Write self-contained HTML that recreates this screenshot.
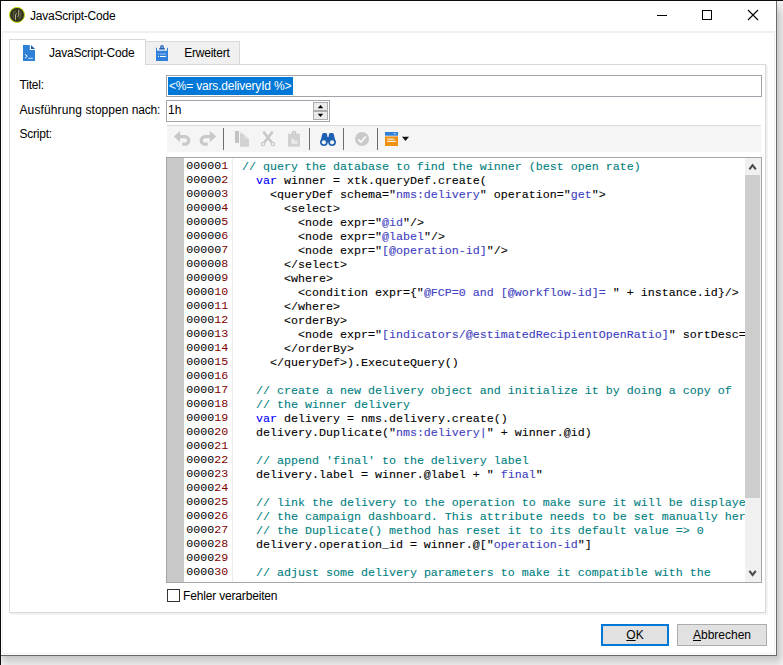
<!DOCTYPE html>
<html lang="de">
<head>
<meta charset="utf-8">
<title>JavaScript-Code</title>
<style>
html,body{margin:0;padding:0;}
body{width:783px;height:665px;overflow:hidden;position:relative;background:#e9e9e9;font-family:"Liberation Sans",sans-serif;font-size:12px;color:#000;}
.abs{position:absolute;}
#shadowR{left:777px;top:1px;width:6px;height:655px;background:linear-gradient(to bottom,rgba(255,255,255,.7),rgba(255,255,255,0) 14px),linear-gradient(to right,#c9c9c9,#e5e5e5);}
#shadowB{left:1px;top:656px;width:776px;height:9px;background:linear-gradient(to right,rgba(255,255,255,.85),rgba(255,255,255,.3) 1px,rgba(255,255,255,0) 7px),linear-gradient(to bottom,#c6c6c6,#e7e7e7);}
#shadowC{left:777px;top:656px;width:6px;height:9px;background:radial-gradient(ellipse 8px 11px at 0 0,#cbcbcb,#f0f0f0);}
#win{left:1px;top:1px;width:775px;height:654px;background:#fff;border-right:1px solid #6c6c6c;border-bottom:1px solid #666;}
#topline{left:0;top:0;width:783px;height:1px;background:#0c0c0c;}
#leftline{left:0;top:0;width:1px;height:665px;background:#0c0c0c;}
#client{left:2px;top:31px;width:771px;height:620px;border:1px solid #f0f0f0;border-top-width:2px;background:#fff;}
.t{position:absolute;white-space:nowrap;line-height:14px;}
#panel{left:9px;top:64px;width:755px;height:547px;border:1px solid #d9d9d9;background:#fff;box-shadow:1px 1px 0 #f0f0f0,2px 2px 0 #f4f4f4;}
#tab1{left:9px;top:39px;width:135px;height:25px;border:1px solid #d9d9d9;border-bottom:none;background:#fff;}
#tab2{left:145px;top:41px;width:95px;height:23px;border:1px solid #d9d9d9;border-left:none;border-bottom:none;background:#f0f0f0;box-sizing:border-box;}
.inp{border:1px solid #a3a3ab;background:#fff;box-sizing:border-box;}
#toolbar{left:167px;top:125px;width:594px;height:27px;background:#f5f5f5;border-top:1px solid #dadada;box-sizing:border-box;}
.sep{position:absolute;top:128px;width:1px;height:22px;background:#6d6d6d;}
#editor{left:166px;top:157px;width:596px;height:426px;border:1px solid #a3a3ab;box-sizing:border-box;background:#fff;overflow:hidden;}
#gutter{left:0;top:0;width:17px;height:424px;background:#c8c8c8;}
#lnsep{left:65px;top:1px;width:1px;height:423px;background:#ebebeb;}
pre{margin:0;font-family:"Liberation Mono",monospace;font-size:11.667px;line-height:14px;position:absolute;top:2px;white-space:pre;}
#ln{left:19.300px;top:1.400px;color:#000;}
#ln b{font-weight:normal;color:#800000;}
#code{left:75px;color:#000;-webkit-text-stroke:0.1px currentColor;}
.c{color:#008080;}
.k{color:#0000ff;}
.s{color:#4040c0;}
#vsb{left:578px;top:0;width:16px;height:424px;background:#f0f0f0;}
#thumb{left:0;top:17px;width:15px;height:323px;background:#cdcdcd;}
.btn{box-sizing:border-box;background:#e1e1e1;border:1px solid #adadad;text-align:center;line-height:20px;}
u{text-decoration:underline;}
</style>
</head>
<body>
<div class="abs" id="shadowR"></div>
<div class="abs" id="shadowB"></div>
<div class="abs" id="shadowC"></div>
<div class="abs" id="win"></div>
<div class="abs" id="topline"></div>
<div class="abs" id="leftline"></div>

<!-- title bar -->
<svg class="abs" style="left:8px;top:6px" width="18" height="18" viewBox="8 6 18 18">
  <circle cx="17" cy="14.900" r="7.500" fill="#34331f" stroke="#c3dc12" stroke-width="1"/>
  <path d="M13.500 18.500V13.800Q13.500 11.300 16 11.300M20.500 11.500V16Q20.500 18.500 18 18.500" fill="none" stroke="#56553a" stroke-width="1.600"/>
  <path d="M15.500 20V14.800Q15.500 13.600 16.900 13.600M18.700 9.800V15.200Q18.700 16.500 17.300 16.500" fill="none" stroke="#bdbd97" stroke-width="0.900"/>
</svg>
<div class="t" style="left:30px;top:9px;letter-spacing:-0.22px;">JavaScript-Code</div>
<svg class="abs" style="left:650px;top:1px" width="125" height="30" viewBox="0 0 125 30">
  <path d="M7 14.5H17" stroke="#000" stroke-width="1" fill="none"/>
  <rect x="52.5" y="9.5" width="9" height="9" stroke="#000" stroke-width="1" fill="none"/>
  <path d="M98 9L108 19M108 9L98 19" stroke="#000" stroke-width="1.1" fill="none"/>
</svg>

<div class="abs" id="client"></div>
<div class="abs" id="panel"></div>
<div class="abs" id="tab2"></div>
<div class="abs" id="tab1"></div>

<!-- tab icons -->
<svg class="abs" style="left:23px;top:45px" width="12" height="16" viewBox="0 0 12 16">
  <path d="M0 0H6.800V5H12V16H0Z" fill="#2e80d8"/>
  <path d="M8 0L12 3.900H8Z" fill="#165db2"/>
  <path d="M2 9.300L4.300 11.200L2 13.100" stroke="#fff" stroke-width="1" fill="none"/>
  <path d="M5.200 13.300H9.800" stroke="#e4eefa" stroke-width="0.900" fill="none"/>
</svg>
<div class="t" style="left:49px;top:46px;letter-spacing:-0.22px;">JavaScript-Code</div>
<svg class="abs" style="left:156px;top:44px" width="12" height="17" viewBox="0 0 12 17">
  <path d="M0 3.800H1V6.700H11V3.800H12V17H0Z" fill="#2e80d8"/>
  <path d="M3 5.600V4.600L4.200 4V2.900a1.800 1.900 0 0 1 3.600 0V4L9 4.600V5.600Z" fill="#1c5fb3"/>
  <rect x="5.400" y="2.400" width="1.300" height="1.300" fill="#c9dbf0"/>
  <rect x="2" y="9.400" width="0.900" height="1.200" fill="#a9c9ef"/>
  <rect x="4.100" y="9.400" width="5.800" height="1.200" fill="#8fb9ea"/>
  <rect x="2" y="12" width="0.900" height="1" fill="#fff"/>
  <rect x="4.100" y="12" width="5.800" height="1" fill="#fff"/>
</svg>
<div class="t" style="left:184.200px;top:46px;letter-spacing:-0.22px;">Erweitert</div>

<!-- form -->
<div class="t" style="left:19.500px;top:78px;letter-spacing:-0.18px;">Titel:</div>
<div class="t" style="left:19.500px;top:103px;"><span style="letter-spacing:0.12px">Ausführung </span><span style="letter-spacing:0.02px">stoppen </span><span style="letter-spacing:-0.18px">nach:</span></div>
<div class="t" style="left:19.500px;top:127px;letter-spacing:-0.22px;">Script:</div>

<div class="abs inp" style="left:166px;top:75px;width:596px;height:22px;"></div>
<div class="abs" style="left:168px;top:77px;width:125px;height:18px;background:#0078d7;"></div>
<div class="t" style="left:169px;top:79px;color:#fff;letter-spacing:-0.19px;">&lt;%= vars.deliveryId %&gt;</div>

<div class="abs inp" style="left:166px;top:100px;width:164px;height:22px;"></div>
<div class="t" style="left:168px;top:103px;">1h</div>
<div class="abs" style="left:313px;top:102px;width:15px;height:9px;background:#ebebeb;border:1px solid #adadad;box-sizing:border-box;"></div>
<div class="abs" style="left:313px;top:111px;width:15px;height:9px;background:#ebebeb;border:1px solid #adadad;box-sizing:border-box;"></div>
<svg class="abs" style="left:313px;top:102px" width="15" height="18" viewBox="0 0 15 18">
  <path d="M4.800 6.200L7.500 3L10.200 6.200Z" fill="#000"/>
  <path d="M4.800 11.800L7.500 15L10.200 11.800Z" fill="#000"/>
</svg>

<!-- toolbar -->
<div class="abs" id="toolbar"></div>
<div class="sep" style="left:223px"></div>
<div class="sep" style="left:309px"></div>
<div class="sep" style="left:343px"></div>
<div class="sep" style="left:377px"></div>
<svg class="abs" id="tbicons" style="left:167px;top:126px" width="260" height="26" viewBox="167 126 260 26">
  <!-- undo -->
  <path d="M173.800 136.500L180.200 130.800V142.200Z" fill="#c9c9c9"/>
  <path d="M179.800 136.700H185A3.750 3.750 0 0 1 185 144.200H182.300" fill="none" stroke="#c9c9c9" stroke-width="3.300"/>
  <!-- redo -->
  <path d="M216.200 136.500L209.800 130.800V142.200Z" fill="#c9c9c9"/>
  <path d="M210.200 136.700H205A3.750 3.750 0 0 0 205 144.200H207.700" fill="none" stroke="#c9c9c9" stroke-width="3.300"/>
  <!-- copy -->
  <rect x="235" y="131" width="4" height="12" fill="#c2c2c2"/>
  <path d="M240 134H243.500L249 139.500V146.700H240Z" fill="#d2d2d2"/>
  <path d="M240.300 131.300L249 139H243.500V134H240.300Z" fill="#dcdcdc"/>
  <!-- cut -->
  <g fill="none" stroke="#c9c9c9">
    <path d="M263.300 131.600L271.800 142.500M272.700 131.600L264.200 142.500" stroke-width="2.600"/>
    <circle cx="263.100" cy="144" r="1.700" stroke-width="1.200"/>
    <circle cx="272.900" cy="144" r="1.700" stroke-width="1.200"/>
  </g>
  <!-- paste -->
  <rect x="288" y="133.700" width="12" height="13" fill="#d1d1d1"/>
  <path d="M291.700 134.500V133a2.300 2.300 0 0 1 4.600 0V134.500Z" fill="#c6c6c6"/>
  <rect x="293.300" y="132.300" width="1.400" height="1.300" fill="#f5f5f5"/>
  <path d="M291.300 138.700H294.300V140.700H297.400V143.700H291.300Z" fill="#ebebeb"/>
  <!-- find -->
  <g fill="#1f60b3">
    <path d="M320.300 142.300L322.200 134.300Q322.500 133 323.800 133H325.500Q326.800 133 327 134.300L327.500 137H328.500L329 134.300Q329.200 133 330.500 133H332.200Q333.500 133 333.800 134.300L335.700 142.300Z"/>
    <circle cx="323.900" cy="142.200" r="3.800"/>
    <circle cx="332.100" cy="142.200" r="3.800"/>
  </g>
  <circle cx="323.900" cy="142.300" r="2.100" fill="#f5f5f5"/>
  <circle cx="332.100" cy="142.300" r="2.100" fill="#f5f5f5"/>
  <!-- check -->
  <circle cx="362" cy="139" r="7" fill="#c9c9c9"/>
  <path d="M358.300 139.300L361 142L365.900 136.400" stroke="#f5f5f5" stroke-width="1.900" fill="none"/>
  <!-- template -->
  <rect x="385" y="132" width="13" height="3.700" fill="#2f7fd6"/>
  <rect x="393.500" y="133.300" width="2.500" height="0.800" fill="#cfe2f7"/>
  <rect x="385" y="136.400" width="13" height="9.600" fill="#ef9213"/>
  <rect x="387.200" y="138.500" width="7.200" height="1.200" fill="#fdf0db"/>
  <rect x="387.200" y="140.800" width="8.700" height="1.200" fill="#fdf0db"/>
  <path d="M402 136.800H409L405.500 141Z" fill="#111"/>
</svg>

<!-- editor -->
<div class="abs" id="editor">
  <div class="abs" id="gutter"></div>
  <div class="abs" id="lnsep"></div>
<pre id="ln">00000<b>1</b>
00000<b>2</b>
00000<b>3</b>
00000<b>4</b>
00000<b>5</b>
00000<b>6</b>
00000<b>7</b>
00000<b>8</b>
00000<b>9</b>
0000<b>10</b>
0000<b>11</b>
0000<b>12</b>
0000<b>13</b>
0000<b>14</b>
0000<b>15</b>
0000<b>16</b>
0000<b>17</b>
0000<b>18</b>
0000<b>19</b>
0000<b>20</b>
0000<b>21</b>
0000<b>22</b>
0000<b>23</b>
0000<b>24</b>
0000<b>25</b>
0000<b>26</b>
0000<b>27</b>
0000<b>28</b>
0000<b>29</b>
0000<b>30</b></pre>
<pre id="code"><span class="c">// query the database to find the winner (best open rate)</span>
  <span class="k">var</span> winner = xtk.queryDef.create(
    &lt;queryDef schema="<span class="s">nms:delivery</span>" operation="<span class="s">get</span>"&gt;
      &lt;select&gt;
        &lt;node expr="<span class="s">@id</span>"/&gt;
        &lt;node expr="<span class="s">@label</span>"/&gt;
        &lt;node expr="<span class="s">[@operation-id]</span>"/&gt;
      &lt;/select&gt;
      &lt;where&gt;
        &lt;condition expr={"<span class="s">@FCP=0 and [@workflow-id]= </span>" + instance.id}/&gt;
      &lt;/where&gt;
      &lt;orderBy&gt;
        &lt;node expr="<span class="s">[indicators/@estimatedRecipientOpenRatio]</span>" sortDesc=
      &lt;/orderBy&gt;
    &lt;/queryDef&gt;).ExecuteQuery()

  <span class="c">// create a new delivery object and initialize it by doing a copy of</span>
  <span class="c">// the winner delivery</span>
  <span class="k">var</span> delivery = nms.delivery.create()
  delivery.Duplicate("<span class="s">nms:delivery|</span>" + winner.@id)

  <span class="c">// append 'final' to the delivery label</span>
  delivery.label = winner.@label + "<span class="s"> final</span>"

  <span class="c">// link the delivery to the operation to make sure it will be displaye</span>
  <span class="c">// the campaign dashboard. This attribute needs to be set manually her</span>
  <span class="c">// the Duplicate() method has reset it to its default value =&gt; 0</span>
  delivery.operation_id = winner.@["<span class="s">operation-id</span>"]

  <span class="c">// adjust some delivery parameters to make it compatible with the</span></pre>
  <div class="abs" id="vsb">
    <div class="abs" id="thumb"></div>
    <svg class="abs" style="left:0;top:0" width="16" height="17" viewBox="0 0 16 17"><path d="M4.400 11.400L7.600 7.200L10.800 11.400" stroke="#4c4c4c" stroke-width="2.100" fill="none"/></svg>
    <svg class="abs" style="left:0;top:407px" width="16" height="17" viewBox="0 0 16 17"><path d="M4.400 5.800L7.600 10L10.800 5.800" stroke="#4c4c4c" stroke-width="2.100" fill="none"/></svg>
  </div>
</div>

<!-- checkbox -->
<div class="abs" style="left:167px;top:589px;width:13px;height:13px;border:1px solid #333;box-sizing:border-box;background:#fff;"></div>
<div class="t" style="left:183px;top:589px;letter-spacing:-0.17px;">Fehler verarbeiten</div>

<!-- buttons -->
<div class="abs btn" style="left:601px;top:624px;width:68px;height:22px;border:2px solid #0078d7;line-height:18px;"><u>O</u>K</div>
<div class="abs btn" style="left:677px;top:624px;width:90px;height:22px;"><u>A</u>bbrechen</div>
</body>
</html>
